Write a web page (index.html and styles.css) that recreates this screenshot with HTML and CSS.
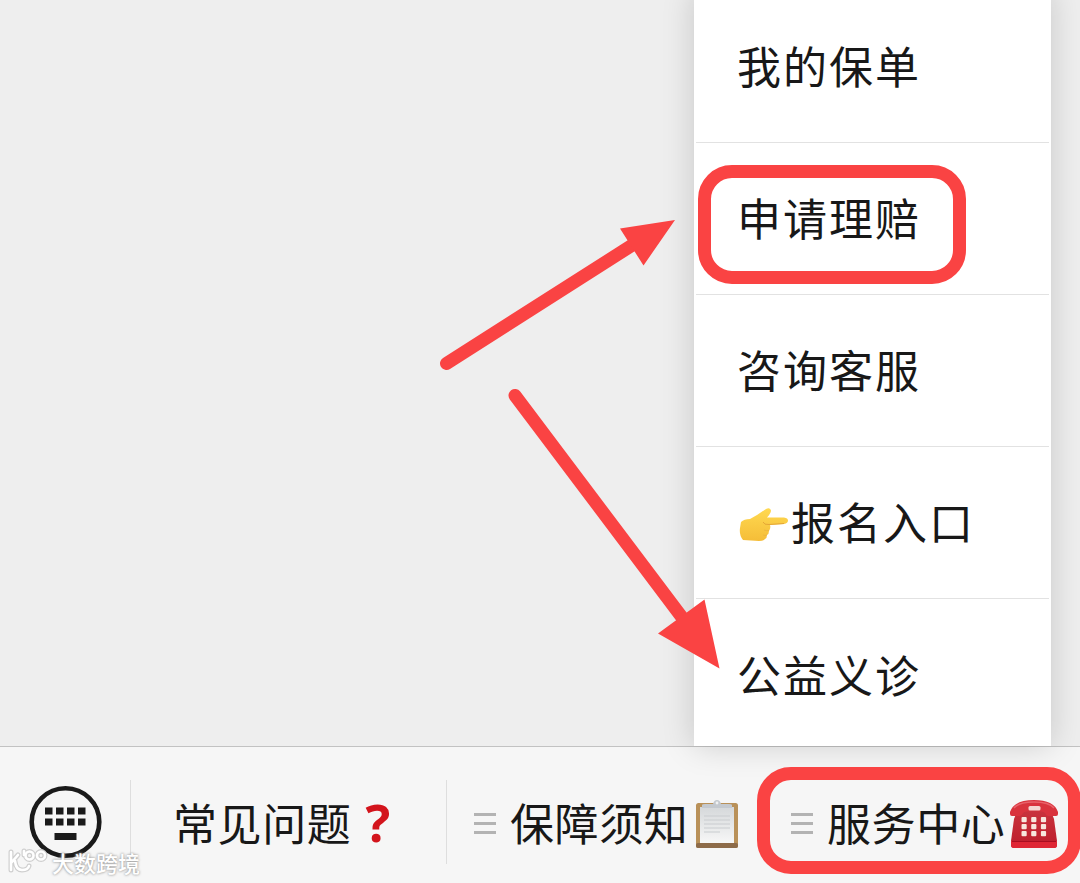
FILE: index.html
```html
<!DOCTYPE html>
<html lang="zh-CN">
<head>
    <meta charset="UTF-8">
    <meta name="viewport" content="width=device-width, initial-scale=1.0">
    <title>服务中心</title>
    <link rel="stylesheet" href="styles.css">
</head>
<body>
    <div class="page">
        <main class="chat"></main>

        <footer class="bar">
            <div class="bar-key">
                <svg width="74" height="74" viewBox="0 0 74 74">
                    <circle cx="37.5" cy="37" r="33.8" fill="none" stroke="#1a1a1a" stroke-width="4.6"/>
                    <g fill="#1a1a1a">
                        <rect x="17" y="22.5" width="7.5" height="7"/>
                        <rect x="28" y="22.5" width="7.5" height="7"/>
                        <rect x="39" y="22.5" width="7.5" height="7"/>
                        <rect x="50" y="22.5" width="7.5" height="7"/>
                        <rect x="17" y="33.5" width="7.5" height="7"/>
                        <rect x="28" y="33.5" width="7.5" height="7"/>
                        <rect x="39" y="33.5" width="7.5" height="7"/>
                        <rect x="50" y="33.5" width="7.5" height="7"/>
                        <rect x="26.5" y="48" width="22" height="7"/>
                    </g>
                </svg>
            </div>
            <div class="bar-item faq">
                <span>常见问题</span><b class="question">?</b>
            </div>
            <div class="bar-item notice">
                <i class="lines"></i>
                <span>保障须知</span>
                <svg class="clipboard" width="44" height="50" viewBox="0 0 44 50">
                    <defs>
                        <linearGradient id="paper" x1="0" y1="0" x2="0" y2="1">
                            <stop offset="0" stop-color="#d5d8da"/>
                            <stop offset="1" stop-color="#f7f7f7"/>
                        </linearGradient>
                    </defs>
                    <rect x="1" y="4" width="42" height="45" rx="2.5" fill="#b99159"/>
                    <rect x="1" y="44" width="42" height="5" rx="2" fill="#8d6b49"/>
                    <rect x="5" y="8" width="34" height="36" fill="url(#paper)"/>
                    <path d="M9 17H35M9 21H35M9 25H35M9 29H35M9 33H25" stroke="#c9cccf" stroke-width="1"/>
                    <path d="M7 9V6q0-1 3-1h8q1-4 4-4t4 4h8q3 0 3 1v3z" fill="#c4c9cf"/>
                    <circle cx="22" cy="4" r="1.4" fill="#f0f1f2"/>
                </svg>
            </div>
            <div class="bar-item service">
                <i class="lines"></i>
                <span>服务中心</span>
                <svg class="phone" width="50" height="50" viewBox="0 0 50 50">
                    <defs>
                        <linearGradient id="phone" x1="0" y1="0" x2="0" y2="1">
                            <stop offset="0" stop-color="#c9343d"/>
                            <stop offset="1" stop-color="#bd1c2c"/>
                        </linearGradient>
                    </defs>
                    <path d="M9 10H41L45 20 48 42V46q0 3-3 3H5q-3 0-3-3V42L5 20z" fill="url(#phone)"/>
                    <path d="M2 42H48V46q0 3-3 3H5q-3 0-3-3z" fill="#df2635"/>
                    <path d="M3 42.5H47" stroke="#a90d20" stroke-width="1"/>
                    <path d="M1 13Q5 1 25 1T49 13V15q0 2-2 2H39q-2 0-3-3Q35 12 25 12T14 14q-1 3-3 3H3q-2 0-2-2z" fill="#d9333d"/>
                    <path d="M5 9Q10 3 25 3T45 9" fill="none" stroke="#e8626a" stroke-width="1.5"/>
                    <rect x="19.5" y="7" width="12" height="4.5" rx="1.5" fill="#f4d7d2"/>
                    <g fill="#f8e6dd">
                        <rect x="12.5" y="18" width="5.2" height="5.2" rx="1"/>
                        <rect x="22.2" y="18" width="5.2" height="5.2" rx="1"/>
                        <rect x="31.9" y="18" width="5.2" height="5.2" rx="1"/>
                        <rect x="12.5" y="25" width="5.2" height="5.2" rx="1"/>
                        <rect x="22.2" y="25" width="5.2" height="5.2" rx="1"/>
                        <rect x="31.9" y="25" width="5.2" height="5.2" rx="1"/>
                        <rect x="12.5" y="32" width="5.2" height="5.2" rx="1"/>
                        <rect x="22.2" y="32" width="5.2" height="5.2" rx="1"/>
                        <rect x="31.9" y="32" width="5.2" height="5.2" rx="1"/>
                    </g>
                </svg>
            </div>
        </footer>

        <nav class="menu">
            <div class="menu-item">我的保单</div>
            <div class="menu-item">申请理赔</div>
            <div class="menu-item">咨询客服</div>
            <div class="menu-item">
                <svg class="hand" width="52" height="34" viewBox="0 0 52 34">
                    <defs>
                        <linearGradient id="skin" x1="0" y1="0" x2="0" y2="1">
                            <stop offset="0" stop-color="#ffd950"/>
                            <stop offset="1" stop-color="#f5bd38"/>
                        </linearGradient>
                    </defs>
                    <path d="M4 14Q7 11 13 11L20 7 29 1Q33-1 34 2.5 34 5 30 9.500H47Q51 10 51 12.5T47 16L33 17Q34 20 32 23 32 26 30 27 30 30 28 31 27 33 22 33L6 32Q2 27 3 20z" fill="url(#skin)"/>
                    <path d="M47 15.5L32 16.5Q27 17 26 14" fill="none" stroke="#e5a636" stroke-width="1"/>
                    <path d="M32 22.5Q29 23 27 22M30 27Q28 28 26 27" fill="none" stroke="#eab040" stroke-width=".7"/>
                </svg>报名入口
            </div>
            <div class="menu-item">公益义诊</div>
        </nav>

        <!-- red marks over the page -->
        <div class="mark mark-claim"></div>
        <div class="mark mark-service"></div>
        <svg class="arrows" width="1080" height="883" viewBox="0 0 1080 883">
            <g stroke="#fa4343" stroke-width="13" stroke-linecap="round">
                <path d="M446.5 363.5L634 244"/>
                <path d="M515 395.5L684 620"/>
            </g>
            <path d="M675 220L620 228.5 643.5 265.5zM719.5 668.5L704.5 599.5 658 633.5z" fill="#fa4343"/>
        </svg>

        <div class="watermark">
            <svg width="42" height="28" viewBox="0 0 42 28" fill="none" stroke-linecap="round" stroke-linejoin="round">
                <g stroke="#cfcfcf" stroke-width="5">
                    <path d="M4 4V22M5 14L11 7M8 13Q9 22 15 22 21 22 22 18"/>
                    <circle cx="22.5" cy="7.5" r="4"/>
                    <circle cx="34" cy="7.5" r="4"/>
                    <path d="M17 3V7"/>
                </g>
                <g stroke="#fff" stroke-width="2.6">
                    <path d="M4 4V22M5 14L11 7M8 13Q9 22 15 22 21 22 22 18"/>
                    <circle cx="22.5" cy="7.5" r="4"/>
                    <circle cx="34" cy="7.5" r="4"/>
                    <path d="M17 3V7"/>
                </g>
            </svg>
            <span>大数跨境</span>
        </div>
    </div>
</body>
</html>
```
FILE: styles.css
```css
*{
    margin: 0;
    padding: 0;
    box-sizing: border-box;
}
body{
    background-color: #eee;
    color: #181818;
    font-family: "Noto Sans CJK SC", sans-serif;
    font-size: 44px;
    overflow: hidden;
}
svg{
    display: block;
    flex-shrink: 0;
}
.page{
    position: relative;
    display: flex;
    flex-direction: column;
    width: 1080px;
    height: 883px;
    overflow: hidden;
}
.chat{
    flex: 1;
}
.bar{
    display: flex;
    align-items: center;
    height: 137px;
    padding-top: 14px;
    border-top: 1px solid #c2c2c2;
    background-color: #f6f6f6;
}
.bar-key{
    display: flex;
    align-items: center;
    width: 131px;
    height: 84px;
    padding-left: 28px;
    border-right: 1px solid #dedede;
}
.bar-item{
    display: flex;
    align-items: center;
    height: 84px;
    line-height: 64px;
    letter-spacing: 0.6px;
    white-space: nowrap;
}
.faq{
    width: 316px;
    padding-left: 42px;
    border-right: 1px solid #dedede;
}
.question{
    margin-left: 14px;
    color: #d3141c;
    font-family: "Open Sans", sans-serif;
    font-size: 52px;
}
.notice{
    width: 316px;
    padding-left: 27px;
}
.service{
    flex: 1;
    padding-left: 28px;
}
.lines{
    width: 22px;
    height: 21px;
    margin: 3px 14px 0 0;
    border-top: 3px solid #b3b3b3;
    border-bottom: 3px solid #b3b3b3;
    background: linear-gradient(#b3b3b3, #b3b3b3) center / 100% 3px no-repeat;
}
.clipboard{
    margin: 3px 0 0 7px;
}
.phone{
    margin: 4px 0 0 4px;
}

.menu{
    position: absolute;
    top: -9px;
    right: 29px;
    width: 357px;
    height: 755px;
    background-color: #fff;
    box-shadow: 0 0 30px rgba(0, 0, 0, .17);
}
.menu-item{
    display: flex;
    align-items: center;
    height: 152px;
    margin: 0 2px;
    padding: 0 0 3px 41px;
    border-bottom: 1px solid #e2e2e2;
    line-height: 64px;
    letter-spacing: 2px;
    white-space: nowrap;
}
.menu-item:last-child{
    border-bottom: none;
}
.hand{
    margin: 8px 2px 0 0;
}

.mark{
    position: absolute;
    border: 13px solid #fa4343;
    border-radius: 34px;
}
.mark-claim{
    top: 165px;
    left: 698px;
    width: 268px;
    height: 119px;
}
.mark-service{
    top: 767px;
    left: 757px;
    width: 324px;
    height: 107px;
}
.arrows{
    position: absolute;
    top: 0;
    left: 0;
}
.watermark{
    position: absolute;
    left: 7px;
    bottom: 6px;
    display: flex;
    align-items: center;
    gap: 3px;
    color: #fff;
    font-size: 22px;
    font-weight: 500;
    line-height: 30px;
    text-shadow: 0 0 3px #999, 0 0 2px #bbb;
}
```
